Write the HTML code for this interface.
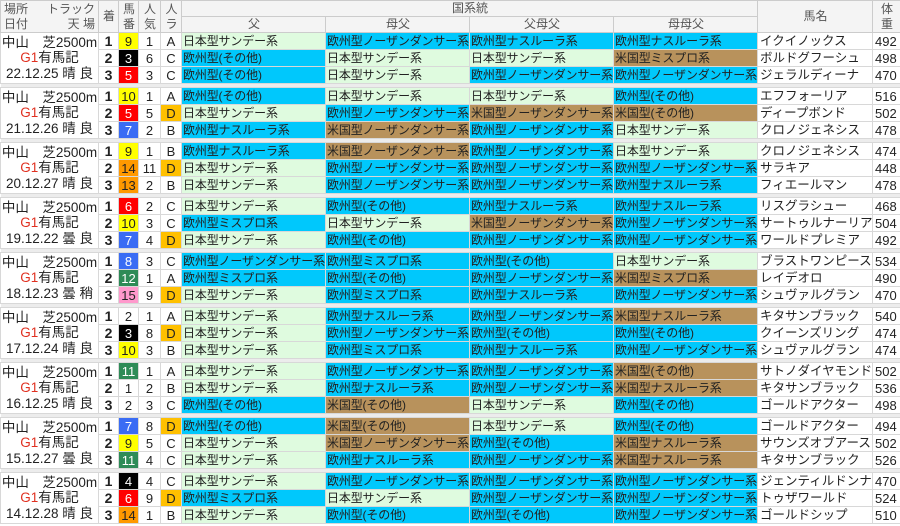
<!DOCTYPE html>
<html><head><meta charset="utf-8">
<style>
*{margin:0;padding:0;box-sizing:border-box}
body{width:900px;height:526px;background:#fff;overflow:hidden;font-family:"Liberation Sans","Noto Sans CJK JP",sans-serif;color:#222}
table{border-collapse:collapse;table-layout:fixed;width:900px}
td{border:1px solid #d8d8d8;height:17px;font-size:12px;line-height:15px;white-space:nowrap;overflow:hidden;padding:0 0 0 1px}
td.g,td.b,td.o{letter-spacing:-0.15px}
.h td{background:#f4f4f4;color:#555;font-size:12px;text-align:center;height:16px;border-color:#ccc}
td.info{font-size:13.5px;line-height:15.5px;text-align:center;padding:0;background:#fff}
.info .r{color:#e03020}
td.c{text-align:center;padding:0;font-size:13px}
td.f{text-align:center;padding:0;font-weight:bold;font-size:14px}
.g{background:#dffbdf}.b{background:#00c8fc}.o{background:#b8925c}
.nw{background:#fff}.nk{background:#000;color:#fff}.nr{background:#ff0000;color:#fff}.nb{background:#3a6cf4;color:#fff}
.ny{background:#ffff00}.ng{background:#2e8b57;color:#fff}.no{background:#ff9900}.np{background:#ff99cc}
.d{background:#ffc000}
tr.s td{height:4px;background:#ececec;border-left:none;border-right:none;padding:0}
td.wt{font-size:13px;padding-left:2px}
td.nm{font-size:12.5px;padding-left:2px}
</style></head><body>
<table>
<colgroup><col style="width:98px"><col style="width:20px"><col style="width:20px"><col style="width:22px"><col style="width:21px"><col style="width:144px"><col style="width:144px"><col style="width:144px"><col style="width:144px"><col style="width:115px"><col style="width:28px"></colgroup>
<tr class="h"><td rowspan="2" style="text-align:left;line-height:15px;padding:0 3px"><div style="display:flex;justify-content:space-between"><span>場所</span><span>トラック</span></div><div style="display:flex;justify-content:space-between"><span>日付</span><span>天 場</span></div></td><td rowspan="2">着</td><td rowspan="2" style="line-height:15px">馬<br>番</td><td rowspan="2" style="line-height:15px">人<br>気</td><td rowspan="2" style="line-height:15px">人<br>ラ</td><td colspan="4">国系統</td><td rowspan="2">馬名</td><td rowspan="2" style="line-height:15px">体<br>重</td></tr>
<tr class="h"><td>父</td><td>母父</td><td>父母父</td><td>母母父</td></tr>

<tr><td class="info" rowspan="3">中山　芝2500m<br><span class="r">G1</span>有馬記<br>22.12.25 晴 良</td><td class="f">1</td><td class="c ny">9</td><td class="c">1</td><td class="c">A</td><td class="g">日本型サンデー系</td><td class="b">欧州型ノーザンダンサー系</td><td class="b">欧州型ナスルーラ系</td><td class="b">欧州型ナスルーラ系</td><td class="nm">イクイノックス</td><td class="wt">492</td></tr>
<tr><td class="f">2</td><td class="c nk">3</td><td class="c">6</td><td class="c">C</td><td class="b">欧州型(その他)</td><td class="g">日本型サンデー系</td><td class="g">日本型サンデー系</td><td class="o">米国型ミスプロ系</td><td class="nm">ボルドグフーシュ</td><td class="wt">498</td></tr>
<tr><td class="f">3</td><td class="c nr">5</td><td class="c">3</td><td class="c">C</td><td class="b">欧州型(その他)</td><td class="g">日本型サンデー系</td><td class="b">欧州型ノーザンダンサー系</td><td class="b">欧州型ノーザンダンサー系</td><td class="nm">ジェラルディーナ</td><td class="wt">470</td></tr>
<tr class="s"><td colspan="11"></td></tr>

<tr><td class="info" rowspan="3">中山　芝2500m<br><span class="r">G1</span>有馬記<br>21.12.26 晴 良</td><td class="f">1</td><td class="c ny">10</td><td class="c">1</td><td class="c">A</td><td class="b">欧州型(その他)</td><td class="g">日本型サンデー系</td><td class="g">日本型サンデー系</td><td class="b">欧州型(その他)</td><td class="nm">エフフォーリア</td><td class="wt">516</td></tr>
<tr><td class="f">2</td><td class="c nr">5</td><td class="c">5</td><td class="c d">D</td><td class="g">日本型サンデー系</td><td class="b">欧州型ノーザンダンサー系</td><td class="o">米国型ノーザンダンサー系</td><td class="o">米国型(その他)</td><td class="nm">ディープボンド</td><td class="wt">502</td></tr>
<tr><td class="f">3</td><td class="c nb">7</td><td class="c">2</td><td class="c">B</td><td class="b">欧州型ナスルーラ系</td><td class="o">米国型ノーザンダンサー系</td><td class="b">欧州型ノーザンダンサー系</td><td class="g">日本型サンデー系</td><td class="nm">クロノジェネシス</td><td class="wt">478</td></tr>
<tr class="s"><td colspan="11"></td></tr>

<tr><td class="info" rowspan="3">中山　芝2500m<br><span class="r">G1</span>有馬記<br>20.12.27 晴 良</td><td class="f">1</td><td class="c ny">9</td><td class="c">1</td><td class="c">B</td><td class="b">欧州型ナスルーラ系</td><td class="o">米国型ノーザンダンサー系</td><td class="b">欧州型ノーザンダンサー系</td><td class="g">日本型サンデー系</td><td class="nm">クロノジェネシス</td><td class="wt">474</td></tr>
<tr><td class="f">2</td><td class="c no">14</td><td class="c">11</td><td class="c d">D</td><td class="g">日本型サンデー系</td><td class="b">欧州型ノーザンダンサー系</td><td class="b">欧州型ノーザンダンサー系</td><td class="b">欧州型ノーザンダンサー系</td><td class="nm">サラキア</td><td class="wt">448</td></tr>
<tr><td class="f">3</td><td class="c no">13</td><td class="c">2</td><td class="c">B</td><td class="g">日本型サンデー系</td><td class="b">欧州型ノーザンダンサー系</td><td class="b">欧州型ノーザンダンサー系</td><td class="b">欧州型ナスルーラ系</td><td class="nm">フィエールマン</td><td class="wt">478</td></tr>
<tr class="s"><td colspan="11"></td></tr>

<tr><td class="info" rowspan="3">中山　芝2500m<br><span class="r">G1</span>有馬記<br>19.12.22 曇 良</td><td class="f">1</td><td class="c nr">6</td><td class="c">2</td><td class="c">C</td><td class="g">日本型サンデー系</td><td class="b">欧州型(その他)</td><td class="b">欧州型ナスルーラ系</td><td class="b">欧州型ナスルーラ系</td><td class="nm">リスグラシュー</td><td class="wt">468</td></tr>
<tr><td class="f">2</td><td class="c ny">10</td><td class="c">3</td><td class="c">C</td><td class="b">欧州型ミスプロ系</td><td class="g">日本型サンデー系</td><td class="o">米国型ノーザンダンサー系</td><td class="b">欧州型ノーザンダンサー系</td><td class="nm">サートゥルナーリア</td><td class="wt">504</td></tr>
<tr><td class="f">3</td><td class="c nb">7</td><td class="c">4</td><td class="c d">D</td><td class="g">日本型サンデー系</td><td class="b">欧州型(その他)</td><td class="b">欧州型ノーザンダンサー系</td><td class="b">欧州型ノーザンダンサー系</td><td class="nm">ワールドプレミア</td><td class="wt">492</td></tr>
<tr class="s"><td colspan="11"></td></tr>

<tr><td class="info" rowspan="3">中山　芝2500m<br><span class="r">G1</span>有馬記<br>18.12.23 曇 稍</td><td class="f">1</td><td class="c nb">8</td><td class="c">3</td><td class="c">C</td><td class="b">欧州型ノーザンダンサー系</td><td class="b">欧州型ミスプロ系</td><td class="b">欧州型(その他)</td><td class="g">日本型サンデー系</td><td class="nm">ブラストワンピース</td><td class="wt">534</td></tr>
<tr><td class="f">2</td><td class="c ng">12</td><td class="c">1</td><td class="c">A</td><td class="b">欧州型ミスプロ系</td><td class="b">欧州型(その他)</td><td class="b">欧州型ノーザンダンサー系</td><td class="o">米国型ミスプロ系</td><td class="nm">レイデオロ</td><td class="wt">490</td></tr>
<tr><td class="f">3</td><td class="c np">15</td><td class="c">9</td><td class="c d">D</td><td class="g">日本型サンデー系</td><td class="b">欧州型ミスプロ系</td><td class="b">欧州型ナスルーラ系</td><td class="b">欧州型ノーザンダンサー系</td><td class="nm">シュヴァルグラン</td><td class="wt">470</td></tr>
<tr class="s"><td colspan="11"></td></tr>

<tr><td class="info" rowspan="3">中山　芝2500m<br><span class="r">G1</span>有馬記<br>17.12.24 晴 良</td><td class="f">1</td><td class="c nw">2</td><td class="c">1</td><td class="c">A</td><td class="g">日本型サンデー系</td><td class="b">欧州型ナスルーラ系</td><td class="b">欧州型ノーザンダンサー系</td><td class="o">米国型ナスルーラ系</td><td class="nm">キタサンブラック</td><td class="wt">540</td></tr>
<tr><td class="f">2</td><td class="c nk">3</td><td class="c">8</td><td class="c d">D</td><td class="g">日本型サンデー系</td><td class="b">欧州型ノーザンダンサー系</td><td class="b">欧州型(その他)</td><td class="b">欧州型(その他)</td><td class="nm">クイーンズリング</td><td class="wt">474</td></tr>
<tr><td class="f">3</td><td class="c ny">10</td><td class="c">3</td><td class="c">B</td><td class="g">日本型サンデー系</td><td class="b">欧州型ミスプロ系</td><td class="b">欧州型ナスルーラ系</td><td class="b">欧州型ノーザンダンサー系</td><td class="nm">シュヴァルグラン</td><td class="wt">474</td></tr>
<tr class="s"><td colspan="11"></td></tr>

<tr><td class="info" rowspan="3">中山　芝2500m<br><span class="r">G1</span>有馬記<br>16.12.25 晴 良</td><td class="f">1</td><td class="c ng">11</td><td class="c">1</td><td class="c">A</td><td class="g">日本型サンデー系</td><td class="b">欧州型ノーザンダンサー系</td><td class="b">欧州型ノーザンダンサー系</td><td class="o">米国型(その他)</td><td class="nm">サトノダイヤモンド</td><td class="wt">502</td></tr>
<tr><td class="f">2</td><td class="c nw">1</td><td class="c">2</td><td class="c">B</td><td class="g">日本型サンデー系</td><td class="b">欧州型ナスルーラ系</td><td class="b">欧州型ノーザンダンサー系</td><td class="o">米国型ナスルーラ系</td><td class="nm">キタサンブラック</td><td class="wt">536</td></tr>
<tr><td class="f">3</td><td class="c nw">2</td><td class="c">3</td><td class="c">C</td><td class="b">欧州型(その他)</td><td class="o">米国型(その他)</td><td class="g">日本型サンデー系</td><td class="b">欧州型(その他)</td><td class="nm">ゴールドアクター</td><td class="wt">498</td></tr>
<tr class="s"><td colspan="11"></td></tr>

<tr><td class="info" rowspan="3">中山　芝2500m<br><span class="r">G1</span>有馬記<br>15.12.27 曇 良</td><td class="f">1</td><td class="c nb">7</td><td class="c">8</td><td class="c d">D</td><td class="b">欧州型(その他)</td><td class="o">米国型(その他)</td><td class="g">日本型サンデー系</td><td class="b">欧州型(その他)</td><td class="nm">ゴールドアクター</td><td class="wt">494</td></tr>
<tr><td class="f">2</td><td class="c ny">9</td><td class="c">5</td><td class="c">C</td><td class="g">日本型サンデー系</td><td class="o">米国型ノーザンダンサー系</td><td class="b">欧州型(その他)</td><td class="o">米国型ナスルーラ系</td><td class="nm">サウンズオブアース</td><td class="wt">502</td></tr>
<tr><td class="f">3</td><td class="c ng">11</td><td class="c">4</td><td class="c">C</td><td class="g">日本型サンデー系</td><td class="b">欧州型ナスルーラ系</td><td class="b">欧州型ノーザンダンサー系</td><td class="o">米国型ナスルーラ系</td><td class="nm">キタサンブラック</td><td class="wt">526</td></tr>
<tr class="s"><td colspan="11"></td></tr>

<tr><td class="info" rowspan="3">中山　芝2500m<br><span class="r">G1</span>有馬記<br>14.12.28 晴 良</td><td class="f">1</td><td class="c nk">4</td><td class="c">4</td><td class="c">C</td><td class="g">日本型サンデー系</td><td class="b">欧州型ノーザンダンサー系</td><td class="b">欧州型ノーザンダンサー系</td><td class="b">欧州型ノーザンダンサー系</td><td class="nm">ジェンティルドンナ</td><td class="wt">470</td></tr>
<tr><td class="f">2</td><td class="c nr">6</td><td class="c">9</td><td class="c d">D</td><td class="b">欧州型ミスプロ系</td><td class="g">日本型サンデー系</td><td class="b">欧州型ノーザンダンサー系</td><td class="b">欧州型ノーザンダンサー系</td><td class="nm">トゥザワールド</td><td class="wt">524</td></tr>
<tr><td class="f">3</td><td class="c no">14</td><td class="c">1</td><td class="c">B</td><td class="g">日本型サンデー系</td><td class="b">欧州型(その他)</td><td class="b">欧州型(その他)</td><td class="b">欧州型ノーザンダンサー系</td><td class="nm">ゴールドシップ</td><td class="wt">510</td></tr>
</table>
</body></html>
